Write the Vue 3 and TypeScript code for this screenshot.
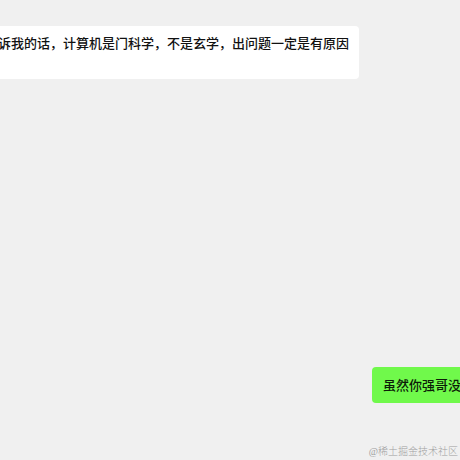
<script setup lang="ts">
interface Message {
  id: number
  side: 'received' | 'sent'
  text: string
}

const messages: Message[] = [
  { id: 1, side: 'received', text: '诉我的话，计算机是门科学，不是玄学，出问题一定是有原因' },
  { id: 2, side: 'sent', text: '虽然你强哥没' },
]
</script>

<template>
  <main class="chat">
    <p v-for="message in messages" :key="message.id" class="bubble" :class="message.side">
      {{ message.text }}
    </p>
    <footer class="watermark">@稀土掘金技术社区</footer>
  </main>
</template>

<style>
body {
  margin: 0;
  background: #f0f0f0;
}
</style>

<style scoped>
.chat {
  box-sizing: border-box;
  display: flex;
  flex-direction: column;
  min-height: 100vh;
  padding-top: 26px;
  overflow: hidden;
  background: #f0f0f0;
  color: #111;
  font-family: "Noto Sans CJK SC", sans-serif;
}

.bubble {
  box-sizing: border-box;
  margin: 0;
  font-size: 13px;
  font-weight: 500;
  line-height: 18px;
  white-space: nowrap;
}

.received {
  display: flex;
  justify-content: flex-end;
  min-height: 53px;
  margin-right: 101px;
  padding: 8px 10px;
  border-radius: 0 4px 4px 0;
  background: #fff;
}

.sent {
  align-self: flex-end;
  margin-top: auto;
  margin-right: -1px;
  padding: 9px 0 9px 11px;
  border-radius: 4px 0 0 4px;
  background: #70f94b;
  color: #0c1c08;
}

.watermark {
  margin-top: 41px;
  padding-right: 2px;
  color: #a0a0a0;
  font-family: "Liberation Serif", "Noto Sans CJK SC", serif;
  font-size: 10px;
  font-weight: 300;
  line-height: 16px;
  text-align: right;
}
</style>
